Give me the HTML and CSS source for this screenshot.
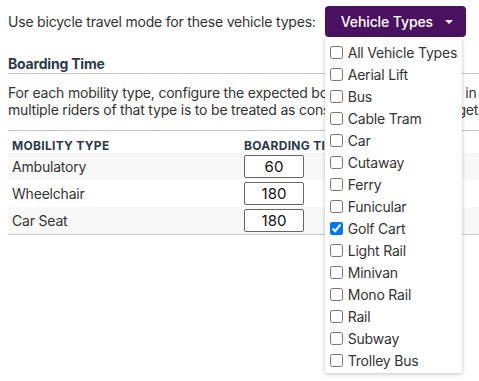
FILE: index.html
```html
<!DOCTYPE html>
<html lang="en">
<head>
  <meta charset="UTF-8" />
  <meta name="viewport" content="width=device-width, initial-scale=1.0"/>
  <title>Boarding Settings</title>
  <link rel="stylesheet" href="styles.css">
</head>
<body>

<div class="frame">
<div class="page">
  <div class="mode-row">
    <span>Use bicycle travel mode for these vehicle types:</span>
    <div class="dropdown">
      <button class="dropdown-toggle">Vehicle Types <span class="caret"></span></button>
      <ul class="dropdown-menu">
        <li><label><input type="checkbox"> All Vehicle Types</label></li>
        <li><label><input type="checkbox"> Aerial Lift</label></li>
        <li><label><input type="checkbox"> Bus</label></li>
        <li><label><input type="checkbox"> Cable Tram</label></li>
        <li><label><input type="checkbox"> Car</label></li>
        <li><label><input type="checkbox"> Cutaway</label></li>
        <li><label><input type="checkbox"> Ferry</label></li>
        <li><label><input type="checkbox"> Funicular</label></li>
        <li><label><input type="checkbox" checked> Golf Cart</label></li>
        <li><label><input type="checkbox"> Light Rail</label></li>
        <li><label><input type="checkbox"> Minivan</label></li>
        <li><label><input type="checkbox"> Mono Rail</label></li>
        <li><label><input type="checkbox"> Rail</label></li>
        <li><label><input type="checkbox"> Subway</label></li>
        <li><label><input type="checkbox"> Trolley Bus</label></li>
      </ul>
    </div>
  </div>

  <h3 class="section-title">Boarding Time</h3>
  <p class="section-help">
    For each mobility type, configure the expected boarding time per rider, in<br>
    multiple riders of that type is to be treated as consecutive or seated together.
  </p>

  <table class="boarding-table">
    <thead>
      <tr><th>Mobility Type</th><th>Boarding Time (sec)</th></tr>
    </thead>
    <tbody>
      <tr><td>Ambulatory</td><td><input class="time-input" type="text" value="60"></td></tr>
      <tr><td>Wheelchair</td><td><input class="time-input" type="text" value="180"></td></tr>
      <tr><td>Car Seat</td><td><input class="time-input" type="text" value="180"></td></tr>
    </tbody>
  </table>
</div>
</div>

</body>
</html>
```

FILE: styles.css
```css
body {
  margin: 0;
  background: #fff;
  color: #333;
  font-family: 'Inter', sans-serif;
  font-size: 14px;
  letter-spacing: -0.2px;
}

.frame {
  min-height: 100vh;
  overflow: hidden;
}

.page {
  width: 600px;
  padding: 6px 8px;
}

.mode-row {
  display: flex;
  align-items: center;
  gap: 9px;
}

.dropdown {
  position: relative;
}

.dropdown-toggle {
  display: flex;
  align-items: center;
  gap: 12px;
  height: 31px;
  padding: 0 13px 0 16px;
  background: #4a1160;
  color: #fff;
  font-family: 'Inter', sans-serif;
  font-size: 14px;
  font-weight: 500;
  letter-spacing: -0.1px;
  border: none;
  border-radius: 4px;
}

.caret {
  width: 0;
  height: 0;
  border-left: 4px solid transparent;
  border-right: 4px solid transparent;
  border-top: 4px solid #fff;
}

.dropdown-menu {
  position: absolute;
  top: 31px;
  left: 0;
  z-index: 10;
  width: 137px;
  margin: 0;
  padding: 4px 0 2px;
  list-style: none;
  background: #fff;
  box-shadow: 0 1px 4px rgba(0, 0, 0, 0.25);
}

.dropdown-menu li {
  height: 22px;
  padding-left: 4px;
}

.dropdown-menu label {
  display: flex;
  align-items: center;
  height: 22px;
  gap: 5px;
  white-space: nowrap;
}

.dropdown-menu input {
  margin: 0 0 0 1px;
  width: 13px;
  height: 13px;
}

.section-title {
  margin: 18px 0 0;
  padding-bottom: 1px;
  font-size: 14px;
  font-weight: 700;
  color: #2c3a4b;
  border-bottom: 1px solid #c8c8c8;
}

.section-help {
  margin: 10px 0 0;
  line-height: 17px;
  white-space: nowrap;
}

.boarding-table {
  width: 100%;
  margin-top: 12px;
  border-collapse: collapse;
  border-top: 1px solid #c8c8c8;
  border-bottom: 1px solid #c8c8c8;
}

.boarding-table th {
  text-align: left;
  padding: 7px 4px 0;
  line-height: 15px;
  font-size: 12px;
  font-weight: 700;
  letter-spacing: 0.3px;
  text-transform: uppercase;
  color: #2c3a4b;
  white-space: nowrap;
}

.boarding-table th:first-child,
.boarding-table td:first-child {
  width: 224px;
}

.boarding-table td {
  height: 27px;
  padding: 0 4px;
}

.boarding-table tbody tr:nth-child(odd) {
  background: #f8f8f8;
}

.time-input {
  box-sizing: border-box;
  width: 60px;
  height: 23px;
  border: 1px solid #666;
  border-radius: 2px;
  text-align: center;
  font-family: 'Inter', sans-serif;
  font-size: 15px;
  color: #111;
}
```
